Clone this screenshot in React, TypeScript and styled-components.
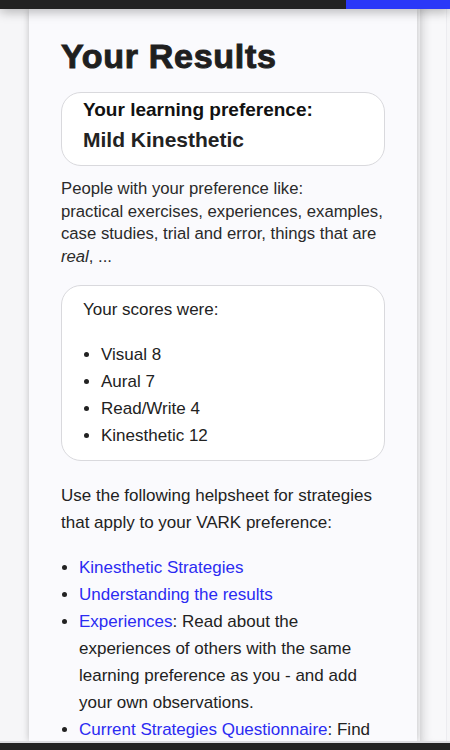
import React from "react";
import styled, { createGlobalStyle } from "styled-components";

const GlobalStyle = createGlobalStyle`
  html, body {
    margin: 0;
    padding: 0;
    height: 100%;
    overflow: hidden;
  }
  body {
    background: #f6f6f8;
    font-family: "Liberation Sans", Arial, sans-serif;
    color: #222;
  }
`;

const Screen = styled.div`
  height: 750px;
  display: flex;
  flex-direction: column;
  overflow: hidden;
`;

const TopBar = styled.div`
  height: 9px;
  flex-shrink: 0;
  display: flex;
  position: relative;
  z-index: 2;
  box-shadow: 0 2px 12px rgba(0, 0, 0, 0.35);
`;

const TopSegment = styled.div<{ $color: string; $grow?: boolean }>`
  background: ${(p) => p.$color};
  flex: ${(p) => (p.$grow ? 1 : "0 0 104px")};
`;

const Body = styled.div`
  flex: 1;
  display: flex;
  overflow: hidden;
  padding-left: 29px;
  gap: 3px;
`;

const Main = styled.main`
  width: 388px;
  flex-shrink: 0;
  background: #fafafd;
  box-shadow: 0 0 7px rgba(0, 0, 0, 0.22);
  padding: 27px 32px 0;
  box-sizing: border-box;
  position: relative;
  z-index: 1;
`;

const Side = styled.aside`
  flex: 1;
  background: #f8f8fa;
  margin-right: 3px;
  box-shadow: inset 10px 0 10px -6px rgba(0, 0, 0, 0.12);
  border-right: 1px solid #ececf0;
`;

const Title = styled.h1`
  margin: 0 0 16px;
  font-size: 34px;
  font-weight: 700;
  letter-spacing: 0.7px;
  line-height: 40px;
  color: #1f1f1f;
  -webkit-text-stroke: 1px #1f1f1f;
`;

const Panel = styled.div<{ $pad: string }>`
  background: #fff;
  border: 1px solid #d9d9dd;
  border-radius: 20px;
  padding: ${(p) => p.$pad};
`;

const PrefLabel = styled.div`
  font-size: 19px;
  font-weight: 700;
  line-height: 26px;
  color: #111;
`;

const PrefValue = styled.div`
  margin-top: 3px;
  font-size: 21px;
  font-weight: 700;
  line-height: 28px;
  color: #222;
`;

const Description = styled.p`
  margin: 12px 0 17px;
  font-size: 16.7px;
  line-height: 22.5px;
  color: #2a2a2a;
`;

const ScoresLead = styled.p`
  margin: 0 0 20px;
  font-size: 17px;
  line-height: 22px;
  color: #222;
`;

const List = styled.ul<{ $indent: number }>`
  margin: 0;
  padding-left: ${(p) => p.$indent}px;
  font-size: 17px;
  line-height: 27px;
  color: #222;
`;

const Item = styled.li`
  padding-left: 0;
`;

const Help = styled.p`
  margin: 21px 0 18px;
  font-size: 17px;
  line-height: 27px;
  color: #222;
`;

const Link = styled.a`
  color: #2b2bf2;
  text-decoration: none;
`;

const BottomBar = styled.div`
  height: 7px;
  flex-shrink: 0;
  background: #232323;
  border-top: 2px solid #dcdce0;
`;

const scores = [
  ["Visual", 8],
  ["Aural", 7],
  ["Read/Write", 4],
  ["Kinesthetic", 12],
];

export default function App() {
  return (
    <Screen>
      <GlobalStyle />
      <TopBar>
        <TopSegment $color="#222" $grow />
        <TopSegment $color="#2a38f8" />
      </TopBar>
      <Body>
        <Main>
          <Title>Your Results</Title>
          <Panel $pad="4px 20px 11px 21px">
            <PrefLabel>Your learning preference:</PrefLabel>
            <PrefValue>Mild Kinesthetic</PrefValue>
          </Panel>
          <Description>
            People with your preference like:
            <br />
            practical exercises, experiences, examples, case studies, trial and
            error, things that are <em>real</em>, ...
          </Description>
          <Panel $pad="13px 20px 11px 21px">
            <ScoresLead>Your scores were:</ScoresLead>
            <List $indent={18}>
              {scores.map(([name, value]) => (
                <Item key={name}>
                  {name} {value}
                </Item>
              ))}
            </List>
          </Panel>
          <Help>
            Use the following helpsheet for strategies that apply to your VARK
            preference:
          </Help>
          <List $indent={18}>
            <Item>
              <Link href="#">Kinesthetic Strategies</Link>
            </Item>
            <Item>
              <Link href="#">Understanding the results</Link>
            </Item>
            <Item>
              <Link href="#">Experiences</Link>: Read about the experiences of
              others with the same learning preference as you - and add your own
              observations.
            </Item>
            <Item>
              <Link href="#">Current Strategies Questionnaire</Link>: Find out
              which strategies you already use.
            </Item>
          </List>
        </Main>
        <Side />
      </Body>
      <BottomBar />
    </Screen>
  );
}
